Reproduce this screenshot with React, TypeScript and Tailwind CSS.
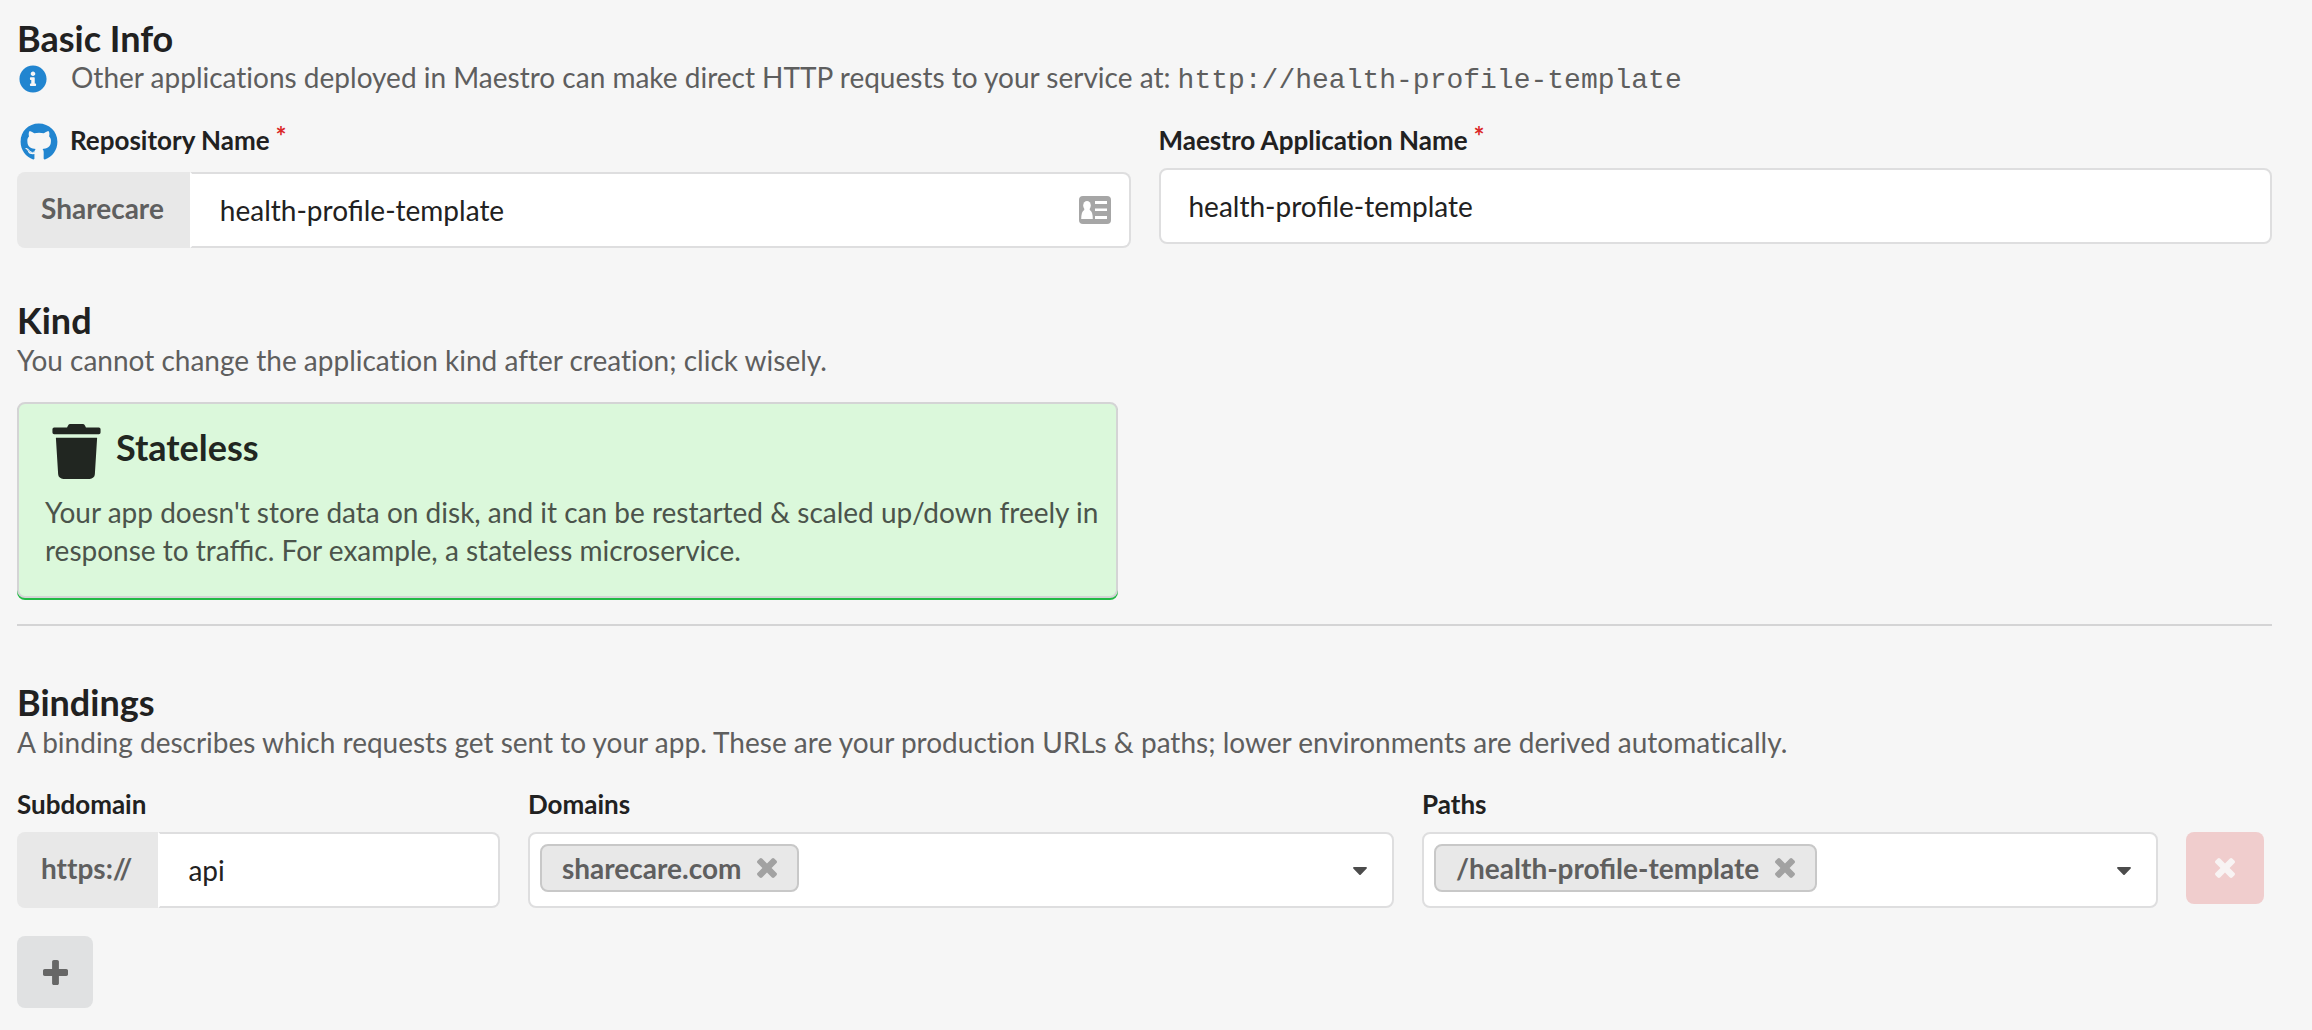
import React from "react";
import { FaGithub, FaInfoCircle, FaTrash, FaCaretDown } from "react-icons/fa";

const field =
  "h-[76px] w-full min-w-0 border-2 border-[#dededf] bg-white px-7 text-[28px] leading-8 text-[#212121] outline-none";
const labelText = "text-[26px] leading-9 font-bold text-[#212121] [font-variant-ligatures:none]";

function SectionHeading({ title, children }: { title: string; children: React.ReactNode }) {
  return (
    <header>
      <h2 className="text-[36px] leading-[48px] font-bold text-[#212121]">{title}</h2>
      <div className="text-[28px] leading-8 text-[#5e5e5e] [font-variant-ligatures:none]">{children}</div>
    </header>
  );
}

function Required() {
  return <span className="ml-1.5 self-start leading-7 text-[#db2828]">*</span>;
}

function Prefix({ children }: { children: React.ReactNode }) {
  return (
    <span className="flex shrink-0 items-center rounded-l-lg bg-[#e8e8e8] pr-[26px] pb-1 pl-6 text-[28px] font-bold text-[#5f5f5f] [font-variant-ligatures:none]">
      {children}
    </span>
  );
}

function Cross() {
  return (
    <svg width="20" height="20" viewBox="302 366 1188 1188" fill="currentColor" aria-hidden="true">
      <path d="M1490 1322q0 40-28 68l-136 136q-28 28-68 28t-68-28l-294-294-294 294q-28 28-68 28t-68-28l-136-136q-28-28-28-68t28-68l294-294-294-294q-28-28-28-68t28-68l136-136q28-28 68-28t68 28l294 294 294-294q28-28 68-28t68 28l136 136q28 28 28 68t-28 68l-294 294 294 294q28 28 28 68z" />
    </svg>
  );
}

function Plus() {
  return (
    <svg width="25" height="25" viewBox="192 128 1408 1408" fill="currentColor" aria-hidden="true">
      <path d="M1600 736v192q0 40-28 68t-68 28h-416v416q0 40-28 68t-68 28h-192q-40 0-68-28t-28-68v-416h-416q-40 0-68-28t-28-68v-192q0-40 28-68t68-28h416v-416q0-40 28-68t68-28h192q40 0 68 28t28 68v416h416q40 0 68 28t28 68z" />
    </svg>
  );
}

function ContactCard() {
  return (
    <svg width="32" height="28" viewBox="0 0 32 28" aria-hidden="true" className="absolute top-6 right-5">
      <rect width="32" height="28" rx="4" fill="#a6a6a6" />
      <g fill="#fff">
        <ellipse cx="8" cy="9.500" rx="3.800" ry="4.500" />
        <path d="M5.500 12.500h5l.3 1.500c2 1.200 3 4 3 9H2.200c0-5 1-7.800 3-9z" />
        <path d="M16 5h12v3H16zM16 12.500h12v2.500H16zM16 20h12v3H16z" />
      </g>
    </svg>
  );
}

function TagPicker({ id, value }: { id: string; value: string }) {
  return (
    <div className="flex h-[76px] items-center justify-between rounded-lg border-2 border-[#dededf] bg-white pr-5 pl-[10px]">
      <span className="mb-1 flex h-12 items-center gap-4 rounded-lg border-2 border-[#c8c8c8] bg-[#e8e8e8] px-5 text-[28px] font-bold text-[#5f5f5f]">
        {value}
        <button type="button" aria-label={`Remove ${value}`} className="text-[#a2a2a2]">
          <Cross />
        </button>
      </span>
      <button id={id} type="button" aria-haspopup="listbox" className="text-[#4c4c4c]">
        <FaCaretDown size={24} />
      </button>
    </div>
  );
}

export default function App() {
  return (
    <main className="min-h-screen bg-[#f6f6f6] pt-[14px] pr-10 pb-5 pl-[17px] font-[Lato,sans-serif]">
      <section>
        <SectionHeading title="Basic Info">
          <p className="flex h-[34px] items-center">
            <FaInfoCircle size={28} className="mr-6 ml-0.5 shrink-0 text-[#2185d0]" />
            <span>
              Other applications deployed in Maestro can make direct HTTP requests to your service at:{" "}
              <code className="font-['Liberation_Mono',monospace]">http://health-profile-template</code>
            </span>
          </p>
        </SectionHeading>
        <div className="mt-[26px] grid grid-cols-2 gap-7">
          <div>
            <label htmlFor="repo" className={`flex h-9 items-center ${labelText}`}>
              <FaGithub size={38} className="mt-1 mr-3 ml-[3px] shrink-0 text-[#2185d0]" />
              Repository Name
              <Required />
            </label>
            <div className="mt-[14px] flex">
              <Prefix>Sharecare</Prefix>
              <div className="relative min-w-0 flex-1">
                <input id="repo" defaultValue="health-profile-template" className={`${field} rounded-r-lg border-l-white`} />
                <ContactCard />
              </div>
            </div>
          </div>
          <div>
            <label htmlFor="app" className={`flex h-9 items-center ${labelText}`}>
              Maestro Application Name
              <Required />
            </label>
            <input id="app" defaultValue="health-profile-template" className={`${field} mt-[10px] rounded-lg`} />
          </div>
        </div>
      </section>

      <section className="mt-12">
        <SectionHeading title="Kind">
          <p>You cannot change the application kind after creation; click wisely.</p>
        </SectionHeading>
        <div className="mt-[26px] grid grid-cols-2 gap-[54px] border-b-2 border-[#d4d4d5] pb-[26px]">
          <button
            type="button"
            className="rounded-lg border-2 border-[#d4d4d5] bg-[#dbf8db] pt-5 pr-2 pb-[27px] pl-[26px] text-left shadow-[0_2px_0_0_#21ba45]"
          >
            <span className="flex items-start text-[36px] leading-[46px] font-bold text-[#212621]">
              <FaTrash size={55} className="mr-3 ml-1" />
              Stateless
            </span>
            <span className="mt-[14px] block text-[28px] leading-[38px] text-[#4b544b]">
              Your app doesn't store data on disk, and it can be restarted &amp; scaled up/down freely in response to
              traffic. For example, a stateless microservice.
            </span>
          </button>
        </div>
      </section>

      <section className="mt-[52px]">
        <SectionHeading title="Bindings">
          <p>
            A binding describes which requests get sent to your app. These are your production URLs &amp; paths; lower
            environments are derived automatically.
          </p>
        </SectionHeading>
        <div className="mt-7 flex gap-7">
          <div className="w-[483px]">
            <label htmlFor="subdomain" className={`mb-[10px] block ${labelText}`}>
              Subdomain
            </label>
            <div className="flex">
              <Prefix>https://</Prefix>
              <input id="subdomain" defaultValue="api" className={`${field} rounded-r-lg border-l-white`} />
            </div>
          </div>
          <div className="w-[866px]">
            <label htmlFor="domains" className={`mb-[10px] block ${labelText}`}>
              Domains
            </label>
            <TagPicker id="domains" value="sharecare.com" />
          </div>
          <div className="flex-1">
            <label htmlFor="paths" className={`mb-[10px] block ${labelText}`}>
              Paths
            </label>
            <TagPicker id="paths" value="/health-profile-template" />
          </div>
          <button
            type="button"
            aria-label="Remove binding"
            className="mt-[46px] mr-2 flex h-[72px] w-[78px] items-center justify-center rounded-lg bg-[#f0cdcd] text-[#f8f3f3]"
          >
            <Cross />
          </button>
        </div>
        <button
          type="button"
          aria-label="Add binding"
          className="mt-7 flex h-[72px] w-[76px] items-center justify-center rounded-lg bg-[#e0e1e2] text-[#666]"
        >
          <Plus />
        </button>
      </section>
    </main>
  );
}
